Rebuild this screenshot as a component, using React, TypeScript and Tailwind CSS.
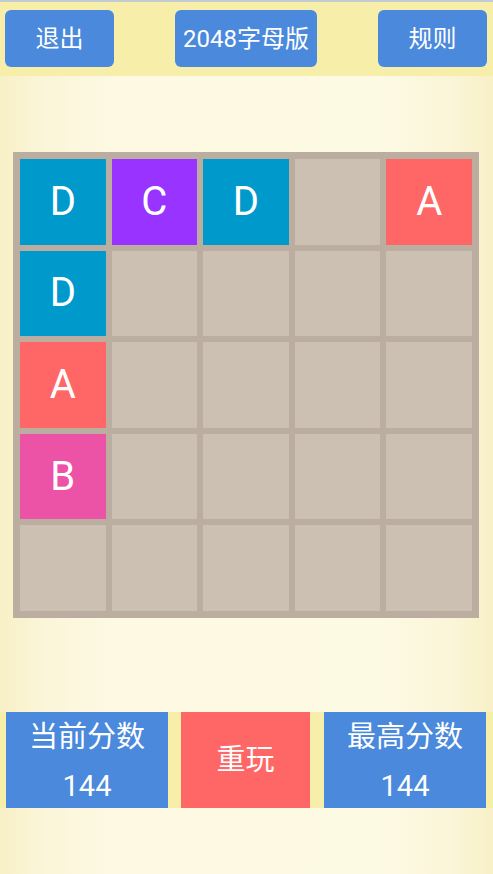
const grid: string[] = [
  'D', 'C', 'D', '', 'A',
  'D', '', '', '', '',
  'A', '', '', '', '',
  'B', '', '', '', '',
  '', '', '', '', '',
];

const tileColor: Record<string, string> = {
  A: 'bg-[#ff6666]',
  B: 'bg-[#ec52a6]',
  C: 'bg-[#9933ff]',
  D: 'bg-[#0099cc]',
};

function Tile({ letter }: { letter: string }) {
  if (!letter) return <div className="bg-[#cbc0b2]" />;
  return (
    <div className={`${tileColor[letter]} flex items-center justify-center text-[40px] text-white leading-none`}>
      {letter}
    </div>
  );
}

export default function App() {
  return (
    <div
      className="h-[874px] w-full flex flex-col bg-[linear-gradient(to_right,#f8f0c6,#fbf5d8_8%,#fdf9e2_22%,#fdfae4_78%,#fbf5d8_92%,#f8f0c6)]"
      style={{ fontFamily: "Roboto, 'Noto Sans CJK SC', sans-serif" }}
    >
      <div className="h-[2px] bg-[#c3cbd2]" />

      {/* Top bar */}
      <div className="bg-[#f7efa9] flex items-center justify-between pl-[5px] pr-[6px] pt-[8px] pb-[9px]">
        <button className="w-[109px] h-[57px] rounded-[6px] bg-[#4a89dc] text-white text-[24px]">退出</button>
        <button className="w-[142px] h-[57px] rounded-[6px] bg-[#4a89dc] text-white text-[24px]">2048字母版</button>
        <button className="w-[109px] h-[57px] rounded-[6px] bg-[#4a89dc] text-white text-[24px]">规则</button>
      </div>

      {/* Board */}
      <div className="mt-[76px] ml-[13px] w-[466px] h-[466px] bg-[#bbad9f] p-[7px] grid grid-cols-5 grid-rows-5 gap-[6px]">
        {grid.map((l, i) => (
          <Tile key={i} letter={l} />
        ))}
      </div>

      {/* Scores */}
      <div className="mt-[94px] h-[96px] bg-[#f7efa9] flex pl-[6px]">
        <div className="w-[162px] bg-[#4a89dc] flex flex-col items-center justify-center pt-[4px] text-white">
          <span className="text-[29px] leading-none">当前分数</span>
          <span className="text-[29px] leading-none mt-[20px]">144</span>
        </div>
        <div className="ml-[13px] w-[129px] bg-[#ff6666] flex items-center justify-center pt-[2px] text-white text-[29px]">
          重玩
        </div>
        <div className="ml-[14px] w-[162px] bg-[#4a89dc] flex flex-col items-center justify-center pt-[4px] text-white">
          <span className="text-[29px] leading-none">最高分数</span>
          <span className="text-[29px] leading-none mt-[20px]">144</span>
        </div>
      </div>
    </div>
  );
}
